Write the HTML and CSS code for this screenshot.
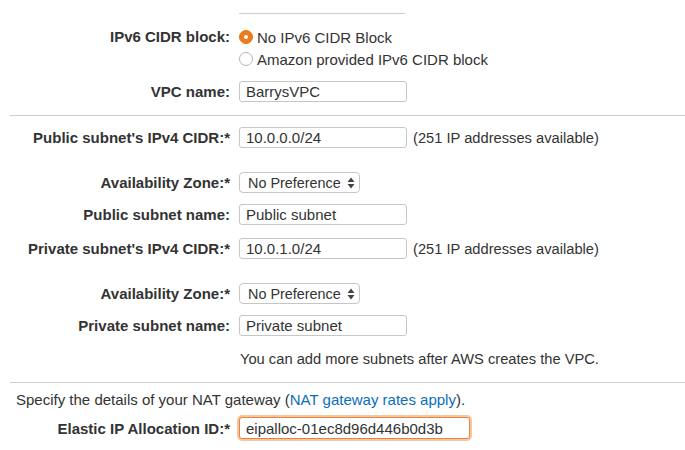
FILE: index.html
```html
<!DOCTYPE html>
<html>
<head>
<meta charset="utf-8">
<link rel="stylesheet" href="styles.css">
</head>
<body>
<div class="page">
  <div class="top-rule"></div>

  <div class="row row-radio">
    <div class="label">IPv6 CIDR block:</div>
    <div class="radios">
      <div class="radio-opt"><span class="radio checked"></span>No IPv6 CIDR Block</div>
      <div class="radio-opt"><span class="radio"></span>Amazon provided IPv6 CIDR block</div>
    </div>
  </div>

  <div class="row row-vpc">
    <div class="label">VPC name:</div>
    <input class="field" type="text" value="BarrysVPC">
  </div>

  <div class="section">
    <div class="row row-cidr">
      <div class="label">Public subnet's IPv4 CIDR:*</div>
      <input class="field" type="text" value="10.0.0.0/24">
      <span class="note">(251 IP addresses available)</span>
    </div>
    <div class="row row-az">
      <div class="label">Availability Zone:*</div>
      <div class="select">No Preference<svg class="arrows" width="8" height="12" viewBox="0 0 8 12"><path d="M4 0.5 L7.5 5 L0.5 5 Z M4 11.5 L7.5 7 L0.5 7 Z" fill="#444"/></svg></div>
    </div>
    <div class="row row-name">
      <div class="label">Public subnet name:</div>
      <input class="field" type="text" value="Public subnet">
    </div>
    <div class="row row-cidr2">
      <div class="label">Private subnet's IPv4 CIDR:*</div>
      <input class="field" type="text" value="10.0.1.0/24">
      <span class="note">(251 IP addresses available)</span>
    </div>
    <div class="row row-az">
      <div class="label">Availability Zone:*</div>
      <div class="select">No Preference<svg class="arrows" width="8" height="12" viewBox="0 0 8 12"><path d="M4 0.5 L7.5 5 L0.5 5 Z M4 11.5 L7.5 7 L0.5 7 Z" fill="#444"/></svg></div>
    </div>
    <div class="row row-name">
      <div class="label">Private subnet name:</div>
      <input class="field" type="text" value="Private subnet">
    </div>
    <div class="help">You can add more subnets after AWS creates the VPC.</div>
  </div>

  <div class="section nat">
    <p class="intro">Specify the details of your NAT gateway (<a class="link" href="#">NAT gateway rates apply</a>).</p>
    <div class="row row-eip">
      <div class="label">Elastic IP Allocation ID:*</div>
      <input class="field field-focus" type="text" value="eipalloc-01ec8d96d446b0d3b">
    </div>
  </div>
</div>
</body>
</html>
```

FILE: styles.css
```css
html, body {
  margin: 0;
  padding: 0;
  background: #ffffff;
}

.page {
  font-family: "Liberation Sans", Arial, Helvetica, sans-serif;
  color: #333333;
  font-size: 15px;
  width: 685px;
  height: 450px;
  overflow: hidden;
}

.top-rule {
  margin-top: 13px;
  margin-left: 239px;
  width: 166px;
  border-top: 1px solid #cccccc;
}

.row {
  display: flex;
  align-items: center;
  gap: 9px;
}

.label {
  width: 230px;
  flex: none;
  text-align: right;
  font-weight: bold;
  font-size: 15px;
  color: #333333;
  white-space: nowrap;
}

.row-radio {
  align-items: flex-start;
  margin-top: 12px;
}

.row-radio .label {
  line-height: 22px;
}

.radios {
  display: flex;
  flex-direction: column;
}

.radio-opt {
  display: flex;
  align-items: center;
  height: 22px;
  gap: 4px;
  color: #333333;
}

.radio {
  width: 12px;
  height: 12px;
  border-radius: 50%;
  border: 1px solid #b5b5b5;
  background: #ffffff;
  box-sizing: content-box;
  flex: none;
  position: relative;
}

.radio.checked {
  border-color: #e8750f;
  background: #ec7c1d;
}

.radio.checked::after {
  content: "";
  position: absolute;
  left: 4px;
  top: 4px;
  width: 4px;
  height: 4px;
  border-radius: 50%;
  background: #ffffff;
}

.field {
  box-sizing: border-box;
  width: 168px;
  height: 21px;
  margin: 0;
  padding: 0 6px;
  border: 1px solid #c6c6c6;
  border-radius: 3px;
  background: #ffffff;
  font-family: "Liberation Sans", Arial, Helvetica, sans-serif;
  font-size: 15px;
  color: #333333;
  outline: none;
}

.row-vpc {
  margin-top: 11px;
}

.section {
  margin-left: 10px;
  border-top: 1px solid #d0d0d0;
}

.section .row {
  margin-left: -10px;
}

.row-vpc + .section {
  margin-top: 13px;
}

.row-cidr {
  margin-top: 11px;
}

.row-az {
  margin-top: 24px;
}

.row-name {
  margin-top: 11px;
}

.row-cidr2 {
  margin-top: 13px;
}

.note {
  margin-left: -3px;
  font-size: 14.7px;
  color: #333333;
}

.select {
  box-sizing: border-box;
  width: 121px;
  height: 21px;
  border: 1px solid #c6c6c6;
  border-radius: 4px;
  background: #ffffff;
  display: flex;
  align-items: center;
  padding: 0 4px 0 8px;
  justify-content: space-between;
  font-size: 14.4px;
  color: #333333;
}

.arrows {
  flex: none;
}

.help {
  margin-top: 13px;
  margin-left: 230px;
  line-height: 20px;
  font-size: 14.7px;
}

.nat {
  margin-top: 13px;
}

.intro {
  margin: 7px 0 0 6px;
  line-height: 20px;
}

.link {
  color: #0a6ebd;
  text-decoration: none;
}

.row-eip {
  margin-top: 7px;
}

.field-focus {
  width: 231px;
  height: 22px;
  border-color: #e98339;
  box-shadow: 0 0 0 2px rgba(236, 130, 50, 0.45);
}
```
